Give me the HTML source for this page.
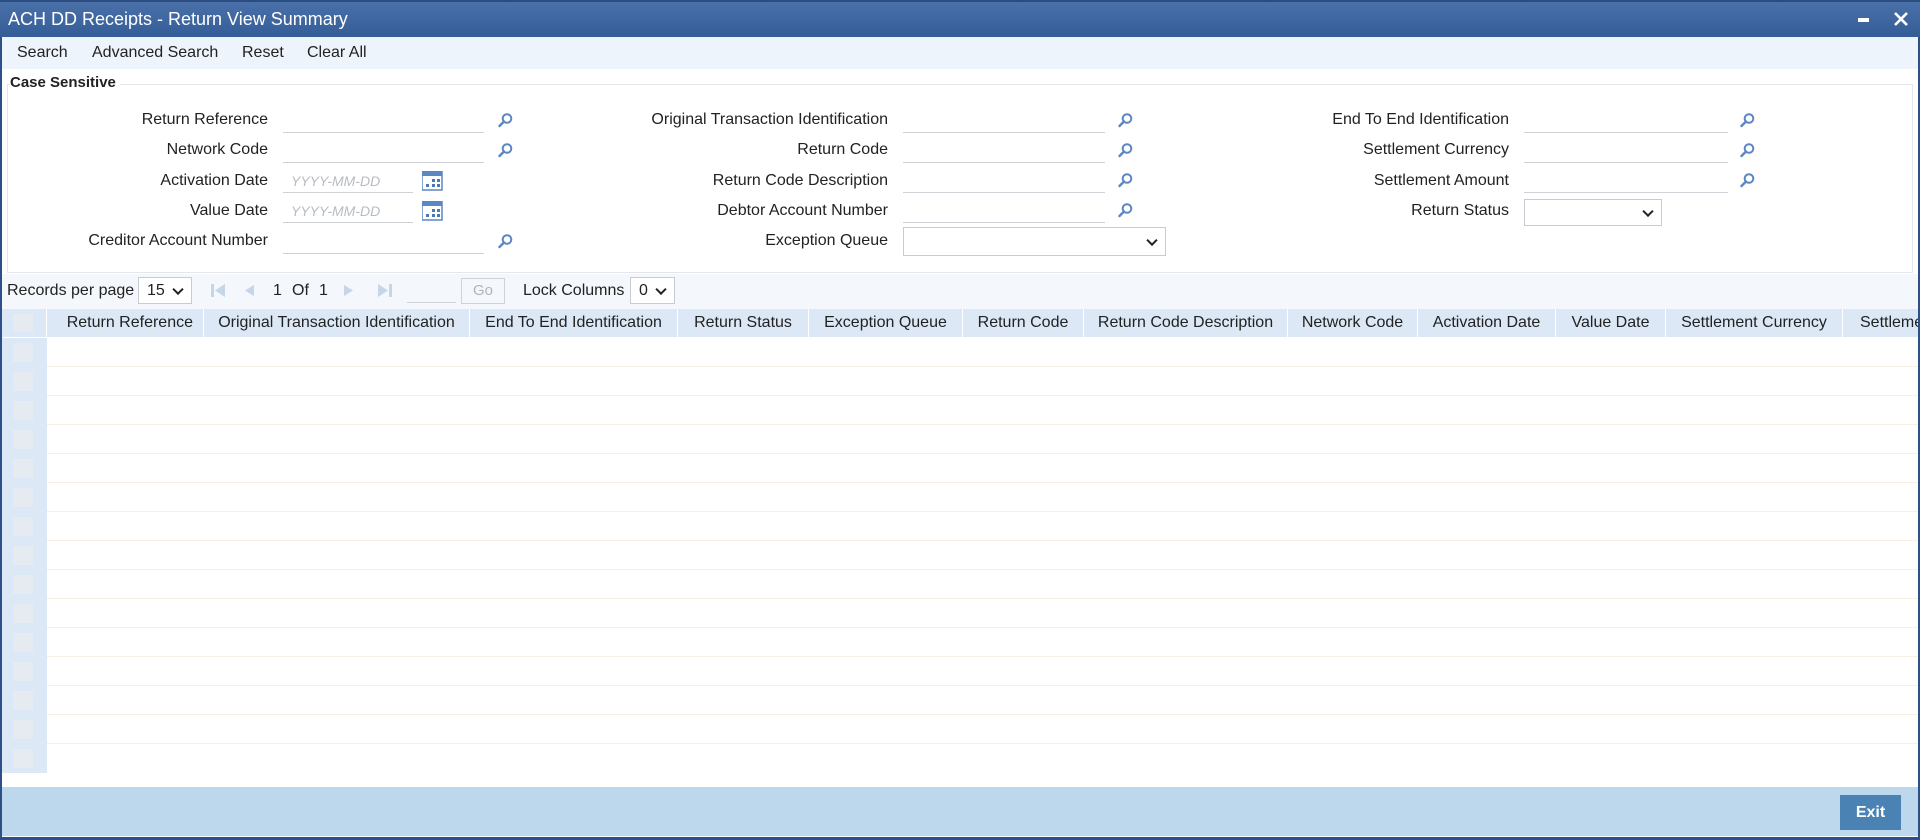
<!DOCTYPE html>
<html><head><meta charset="utf-8">
<style>
*{box-sizing:border-box;margin:0;padding:0}
body{width:1923px;height:840px;position:relative;overflow:hidden;background:#fff;font-family:"Liberation Sans",Arial,sans-serif;color:#222}
.a{position:absolute}
.win{position:absolute;left:0;top:0;width:1920px;height:840px;border-left:2px solid #2d5088;border-right:2px solid #2d5088;border-bottom:3px solid #2d5088}
.title{left:0;top:0;width:1920px;height:37px;background:linear-gradient(#4a70a8,#345d98);border-top:2px solid #2a4c80;color:#fff;font-size:18px;line-height:34px;padding-left:8px}
.menu{left:2px;top:37px;width:1916px;height:32px;background:#eef4fc;font-size:16px;line-height:32px}
.menu span{position:absolute}
.fs{left:7px;top:84px;width:1906px;height:189px;border:1px solid #e3e7ec;border-right:1px solid #e3e7ec}
.lbl{position:absolute;font-size:16px;text-align:right;width:300px;line-height:20px}
.inp{position:absolute;height:24px;border-bottom:1px solid #cfd3d8}
.ph{font-style:italic;color:#b8bcc2;font-size:14px;line-height:24px;padding-left:8px}
.sel{position:absolute;border:1px solid #c8ccd2;background:#fff}
.chev{position:absolute;right:9px;top:50%;width:8px;height:8px;border-right:2px solid #222;border-bottom:2px solid #222;transform:translateY(-70%) rotate(45deg)}
.pg{left:2px;top:274px;width:1916px;height:35px;background:#f4f7fc}
.hdr{left:2px;top:309px;width:1916px;height:28px;background:#dce8f6}
.hc{position:absolute;top:309px;height:28px;line-height:28px;font-size:16px;text-align:center;border-right:1px solid #fff;white-space:nowrap;overflow:hidden}
.row{position:absolute;left:47px;width:1871px;height:29px;border-bottom:1px solid #f6efe4}
.lc{position:absolute;left:2px;width:45px;height:29px;background:#dce8f6}
.lc i{position:absolute;left:11px;top:5px;width:20px;height:19px;background:#e6ebf2}
</style></head><body>
<div class="win"></div>
<div class="a title">ACH DD Receipts - Return View Summary</div>
<div class="a" style="left:1858px;top:18px;width:11px;height:4px;background:#fff"></div>
<svg class="a" style="left:1894px;top:12px" width="14" height="14"><path d="M1 1L13 13M13 1L1 13" stroke="#fff" stroke-width="2.6"/></svg>
<div class="a menu"><span style="left:15px">Search</span><span style="left:90px">Advanced Search</span><span style="left:240px">Reset</span><span style="left:305px">Clear All</span></div>
<div class="a fs"></div>
<div class="a" style="left:10px;top:74px;font-size:15px;font-weight:bold;background:#fff;padding-right:4px">Case Sensitive</div>

<!-- col1 -->
<div class="lbl" style="left:-32px;top:110px">Return Reference</div>
<div class="inp" style="left:283px;top:109px;width:201px"></div>
<div class="lbl" style="left:-32px;top:140px">Network Code</div>
<div class="inp" style="left:283px;top:139px;width:201px"></div>
<div class="lbl" style="left:-32px;top:171px">Activation Date</div>
<div class="inp ph" style="left:283px;top:169px;width:130px">YYYY-MM-DD</div>
<div class="lbl" style="left:-32px;top:201px">Value Date</div>
<div class="inp ph" style="left:283px;top:199px;width:130px">YYYY-MM-DD</div>
<div class="lbl" style="left:-32px;top:231px">Creditor Account Number</div>
<div class="inp" style="left:283px;top:230px;width:201px"></div>
<!-- col2 -->
<div class="lbl" style="left:588px;top:110px">Original Transaction Identification</div>
<div class="inp" style="left:903px;top:109px;width:202px"></div>
<div class="lbl" style="left:588px;top:140px">Return Code</div>
<div class="inp" style="left:903px;top:139px;width:202px"></div>
<div class="lbl" style="left:588px;top:171px">Return Code Description</div>
<div class="inp" style="left:903px;top:169px;width:202px"></div>
<div class="lbl" style="left:588px;top:201px">Debtor Account Number</div>
<div class="inp" style="left:903px;top:199px;width:202px"></div>
<div class="lbl" style="left:588px;top:231px">Exception Queue</div>
<div class="sel" style="left:903px;top:227px;width:263px;height:29px"><i class="chev"></i></div>
<!-- col3 -->
<div class="lbl" style="left:1209px;top:110px">End To End Identification</div>
<div class="inp" style="left:1524px;top:109px;width:204px"></div>
<div class="lbl" style="left:1209px;top:140px">Settlement Currency</div>
<div class="inp" style="left:1524px;top:139px;width:204px"></div>
<div class="lbl" style="left:1209px;top:171px">Settlement Amount</div>
<div class="inp" style="left:1524px;top:169px;width:204px"></div>
<div class="lbl" style="left:1209px;top:201px">Return Status</div>
<div class="sel" style="left:1524px;top:199px;width:138px;height:27px"><i class="chev"></i></div>

<!-- search icons -->
<svg width="0" height="0" style="position:absolute"><defs><g id="s"><circle cx="9" cy="5.5" r="4.3" fill="none" stroke="#5b87c5" stroke-width="2"/><path d="M6 8.5L1.5 13" stroke="#5b87c5" stroke-width="2.4" stroke-linecap="round"/></g>
<g id="c"><rect x="0" y="0" width="20" height="19" fill="#fff" stroke="#5b87c5" stroke-width="1.5"/><rect x="0" y="0" width="20" height="5" fill="#5b87c5"/><g fill="#4a78b8"><rect x="10" y="8" width="3" height="3"/><rect x="15" y="8" width="3" height="3"/><rect x="4" y="13" width="3" height="3"/><rect x="10" y="13" width="3" height="3"/><rect x="15" y="13" width="3" height="3"/></g></g></defs></svg>
<svg class="a" style="left:498px;top:113px" width="16" height="16"><use href="#s"/></svg>
<svg class="a" style="left:498px;top:143px" width="16" height="16"><use href="#s"/></svg>
<svg class="a" style="left:498px;top:234px" width="16" height="16"><use href="#s"/></svg>
<svg class="a" style="left:1118px;top:113px" width="16" height="16"><use href="#s"/></svg>
<svg class="a" style="left:1118px;top:143px" width="16" height="16"><use href="#s"/></svg>
<svg class="a" style="left:1118px;top:173px" width="16" height="16"><use href="#s"/></svg>
<svg class="a" style="left:1118px;top:203px" width="16" height="16"><use href="#s"/></svg>
<svg class="a" style="left:1740px;top:113px" width="16" height="16"><use href="#s"/></svg>
<svg class="a" style="left:1740px;top:143px" width="16" height="16"><use href="#s"/></svg>
<svg class="a" style="left:1740px;top:173px" width="16" height="16"><use href="#s"/></svg>
<svg class="a" style="left:422px;top:171px" width="21" height="20"><use href="#c"/></svg>
<svg class="a" style="left:422px;top:201px" width="21" height="20"><use href="#c"/></svg>

<!-- pagination -->
<div class="a pg"></div>
<div class="a" style="left:7px;top:281px;font-size:16px;line-height:20px">Records per page</div>
<div class="sel" style="left:138px;top:277px;width:54px;height:27px;font-size:16px;line-height:25px;padding-left:8px">15<i class="chev"></i></div>
<svg class="a" style="left:211px;top:282px" width="120" height="18"><g fill="#c5d5ea"><rect x="0" y="2" width="3" height="13"/><path d="M14 2L4 8.5L14 15Z"/><path d="M43 3L34 8.5L43 14Z"/></g></svg>
<div class="a" style="left:273px;top:281px;font-size:16px;line-height:20px">1</div>
<div class="a" style="left:292px;top:281px;font-size:16px;line-height:20px">Of</div>
<div class="a" style="left:319px;top:281px;font-size:16px;line-height:20px">1</div>
<svg class="a" style="left:340px;top:282px" width="60" height="18"><g fill="#c5d5ea"><path d="M4 3L13 8.5L4 14Z"/><path d="M38 2L48 8.5L38 15Z"/><rect x="49" y="2" width="3" height="13"/></g></svg>
<div class="a" style="left:407px;top:302px;width:49px;border-bottom:1px solid #cfd3d8"></div>
<div class="a" style="left:461px;top:278px;width:44px;height:26px;border:1px solid #cfd3d8;color:#b0b4ba;font-size:15px;line-height:24px;text-align:center">Go</div>
<div class="a" style="left:523px;top:281px;font-size:16px;line-height:20px">Lock Columns</div>
<div class="sel" style="left:630px;top:277px;width:45px;height:27px;font-size:16px;line-height:25px;padding-left:8px">0<i class="chev"></i></div>

<!-- table header -->
<div class="a hdr"></div>
<div class="a" style="left:13px;top:314px;width:20px;height:18px;background:#e6ebf2"></div>
<div class="hc" style="left:2px;width:45px"></div>
<div class="hc" style="left:47px;width:157px;text-align:right;padding-right:10px">Return Reference</div>
<div class="hc" style="left:204px;width:266px">Original Transaction Identification</div>
<div class="hc" style="left:470px;width:208px">End To End Identification</div>
<div class="hc" style="left:678px;width:131px">Return Status</div>
<div class="hc" style="left:809px;width:154px">Exception Queue</div>
<div class="hc" style="left:963px;width:121px">Return Code</div>
<div class="hc" style="left:1084px;width:204px">Return Code Description</div>
<div class="hc" style="left:1288px;width:130px">Network Code</div>
<div class="hc" style="left:1418px;width:138px">Activation Date</div>
<div class="hc" style="left:1556px;width:110px">Value Date</div>
<div class="hc" style="left:1666px;width:177px">Settlement Currency</div>
<div class="hc" style="left:1843px;width:75px;text-align:left;padding-left:17px;border-right:0">Settlement Amount</div>

<!-- rows -->
<div id="rows"></div>
<div class="lc" style="top:338px"><i></i></div><div class="row" style="top:338px"></div>
<div class="lc" style="top:367px"><i></i></div><div class="row" style="top:367px"></div>
<div class="lc" style="top:396px"><i></i></div><div class="row" style="top:396px"></div>
<div class="lc" style="top:425px"><i></i></div><div class="row" style="top:425px"></div>
<div class="lc" style="top:454px"><i></i></div><div class="row" style="top:454px"></div>
<div class="lc" style="top:483px"><i></i></div><div class="row" style="top:483px"></div>
<div class="lc" style="top:512px"><i></i></div><div class="row" style="top:512px"></div>
<div class="lc" style="top:541px"><i></i></div><div class="row" style="top:541px"></div>
<div class="lc" style="top:570px"><i></i></div><div class="row" style="top:570px"></div>
<div class="lc" style="top:599px"><i></i></div><div class="row" style="top:599px"></div>
<div class="lc" style="top:628px"><i></i></div><div class="row" style="top:628px"></div>
<div class="lc" style="top:657px"><i></i></div><div class="row" style="top:657px"></div>
<div class="lc" style="top:686px"><i></i></div><div class="row" style="top:686px"></div>
<div class="lc" style="top:715px"><i></i></div><div class="row" style="top:715px"></div>
<div class="lc" style="top:744px"><i></i></div><div class="row" style="top:744px;border-bottom:0"></div>

<!-- footer -->
<div class="a" style="left:2px;top:787px;width:1916px;height:49px;background:#bdd8ec"></div>
<div class="a" style="left:1840px;top:795px;width:61px;height:35px;background:#4a82b4;color:#fff;font-weight:bold;font-size:16px;line-height:35px;text-align:center">Exit</div>
<div class="a" style="left:0;top:837px;width:1920px;height:3px;background:#2d5088"></div>
</body></html>
